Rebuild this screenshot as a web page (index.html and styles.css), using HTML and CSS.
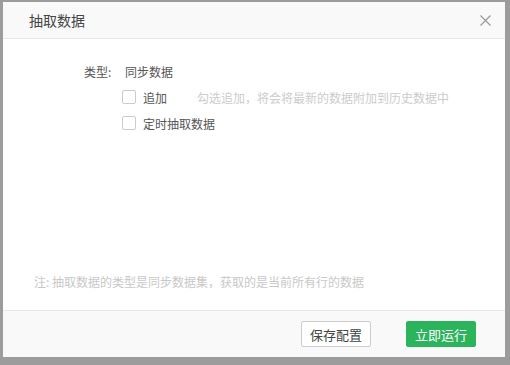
FILE: index.html
```html
<!DOCTYPE html>
<html lang="zh-CN">
    <head>
        <meta charset="utf-8">
        <link rel="stylesheet" href="styles.css">
    </head>
    <body>
        <div class="dialog">
            <div class="dialog-header">
                <span class="dialog-title">抽取数据</span>
                <span class="dialog-close">
                    <svg width="11" height="11" viewBox="0 0 11 11"><path d="M0.5 0.5L10.5 10.5M10.5 0.5L0.5 10.5" stroke="#999" stroke-width="1.2" fill="none"/></svg>
                </span>
            </div>
            <div class="dialog-body">
                <div class="row">
                    <span class="label">类型:</span>
                    <span class="value">同步数据</span>
                </div>
                <div class="check-row">
                    <span class="checkbox"></span>
                    <span class="check-text">追加</span>
                    <span class="hint">勾选追加，将会将最新的数据附加到历史数据中</span>
                </div>
                <div class="check-row">
                    <span class="checkbox"></span>
                    <span class="check-text">定时抽取数据</span>
                </div>
                <p class="note">注: 抽取数据的类型是同步数据集，获取的是当前所有行的数据</p>
            </div>
            <div class="dialog-footer">
                <button class="btn">保存配置</button>
                <button class="btn btn-primary">立即运行</button>
            </div>
        </div>
    </body>
</html>
```

FILE: styles.css
```css
html, body {
    margin: 0;
    height: 100%;
}
body {
    background: #9c9c9c;
    font-family: "Noto Sans CJK SC", "Noto Sans", sans-serif;
    overflow: hidden;
}
.dialog {
    margin: 2px 5px 0 3px;
    height: 355px;
    background: #fff;
    display: flex;
    flex-direction: column;
}
.dialog-header {
    height: 36px;
    border-bottom: 1px solid #e8e8e8;
    background: #f9f9f9;
    display: flex;
    align-items: center;
    justify-content: space-between;
    padding: 0 14px 0 26px;
}
.dialog-title {
    font-size: 14px;
    color: #444;
}
.dialog-close {
    display: flex;
    margin-top: 1px;
}
.dialog-body {
    flex: 1;
    position: relative;
    padding-top: 24px;
}
.row {
    display: flex;
    font-size: 12px;
    color: #555;
    padding-left: 81px;
    line-height: 18px;
}
.label {
    width: 41px;
}
.check-row {
    display: flex;
    align-items: center;
    font-size: 12px;
    color: #555;
    padding-left: 119px;
    height: 26px;
    margin-top: 3px;
    white-space: nowrap;
}
.check-row + .check-row {
    margin-top: 0;
}
.checkbox {
    flex: none;
    width: 12px;
    height: 12px;
    border: 1px solid #ccc;
    border-radius: 2px;
    background: #fff;
    margin-right: 7px;
}
.check-text {
    min-width: 54px;
}
.hint {
    color: #ccc;
}
.note {
    position: absolute;
    left: 31px;
    bottom: 20px;
    margin: 0;
    font-size: 12px;
    color: #c8c8c8;
}
.dialog-footer {
    height: 46px;
    border-top: 1px solid #e8e8e8;
    background: #f9f9f9;
    display: flex;
    align-items: center;
    justify-content: flex-end;
    gap: 35px;
    padding-right: 29px;
}
.btn {
    width: 70px;
    height: 26px;
    border: 1px solid #ccc;
    border-radius: 2px;
    background: #fff;
    color: #444;
    font-family: inherit;
    font-size: 13px;
    padding: 0;
}
.btn-primary {
    background: #2bb45c;
    border-color: #2bb45c;
    color: #fff;
}
```
